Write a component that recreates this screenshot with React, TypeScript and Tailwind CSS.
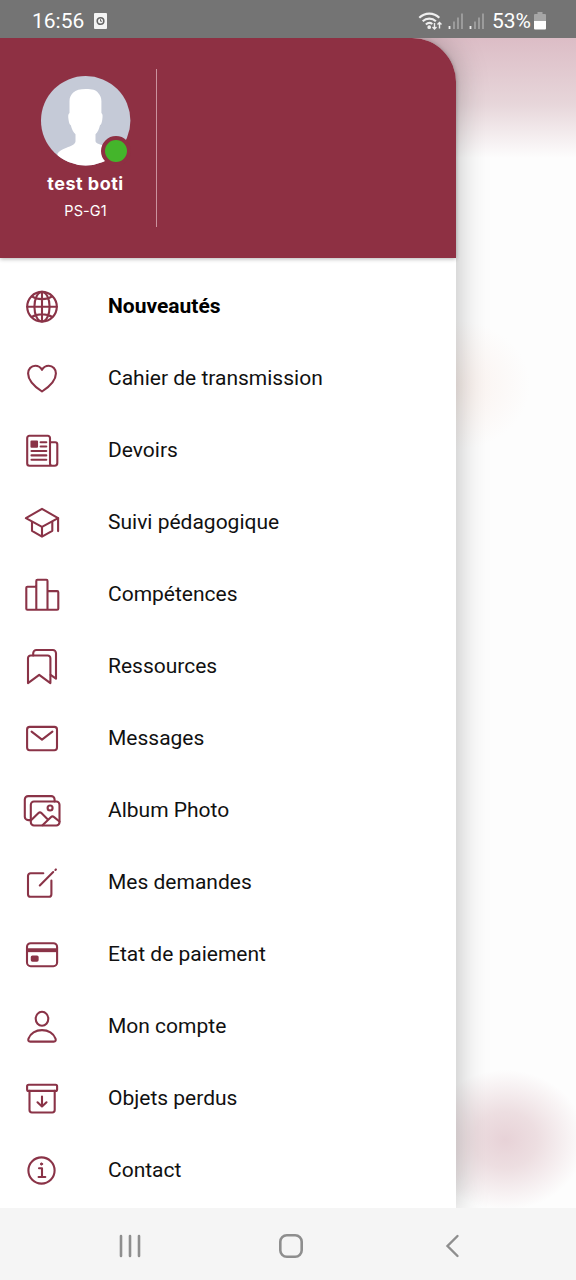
import type { ReactNode } from 'react';

const MENU_ITEMS: { label: string; active?: boolean; icon: ReactNode }[] = [
  {
    label: 'Nouveautés',
    active: true,
    icon: (
      <>
        <circle cx="24" cy="24.7" r="14.8" />
        <ellipse cx="24" cy="24.7" rx="7.6" ry="14.8" />
        <path d="M24 10v29.5M9.2 24.7h29.6M13.8 14.4c5.5 3.6 14.9 3.6 20.4 0M13.8 35c5.5-3.6 14.9-3.6 20.4 0" />
      </>
    ),
  },
  {
    label: 'Cahier de transmission',
    icon: (
      <path d="M24 15.8c-1.5-2.6-4-4-6.7-4-4.2 0-7.2 3.4-7.2 7.6 0 7 5.5 12.5 13.9 18.1 8.4-5.6 13.9-11.1 13.9-18.1 0-4.2-3-7.6-7.2-7.6-2.7 0-5.2 1.4-6.7 4z" />
    ),
  },
  {
    label: 'Devoirs',
    icon: (
      <>
        <path d="M32 16.2V12a2.2 2.2 0 0 0-2.2-2.2H11.4A2.2 2.2 0 0 0 9.2 12v25.6a2.2 2.2 0 0 0 2.2 2.2H36.6a2.7 2.7 0 0 0 2.7-2.7V18.4a2.2 2.2 0 0 0-2.2-2.2H32v21.2a2.4 2.4 0 0 0 2.4 2.4" />
        <rect x="13.5" y="15.5" width="5.5" height="5.2" fill="currentColor" />
        <path d="M22.6 16.2h5.7M22.6 20.5h5.7M13.5 25h14.8M13.5 29.4h14.8M13.5 33.7h14.8" />
      </>
    ),
  },
  {
    label: 'Suivi pédagogique',
    icon: (
      <>
        <path d="M7.9 20.2 24 10.9l16.1 9.3L24 28.9z" />
        <path d="M14 24v8.8l10 5.8 10.3-5.8V24M24 29v9.5M40.1 20.2v12.9" />
      </>
    ),
  },
  {
    label: 'Compétences',
    icon: (
      <path d="M18.3 39.8V17.8a1.1 1.1 0 0 0-1.1-1.1H9.4a1.1 1.1 0 0 0-1.1 1.1v20.9a1.1 1.1 0 0 0 1.1 1.1h29.8a1.1 1.1 0 0 0 1.1-1.1V22.2a1.1 1.1 0 0 0-1.1-1.1h-9.7M18.3 17.5v-6.6a1.1 1.1 0 0 1 1.1-1.1h9a1.1 1.1 0 0 1 1.1 1.1v28.9" />
    ),
  },
  {
    label: 'Ressources',
    icon: (
      <>
        <path d="M10 41.1V16.2a2.7 2.7 0 0 1 2.7-2.7h17a2.7 2.7 0 0 1 2.7 2.7v24.9l-11.2-8.3z" />
        <path d="M15.2 13.5v-2.3A3.2 3.2 0 0 1 18.4 8h16.4A3.2 3.2 0 0 1 38 11.2v25.5l-5.4-3.9" />
      </>
    ),
  },
  {
    label: 'Messages',
    icon: (
      <>
        <rect x="9.1" y="12.9" width="29.9" height="23.3" rx="2.6" />
        <path d="m13.6 17.6 10.4 8 10.4-8" />
      </>
    ),
  },
  {
    label: 'Album Photo',
    icon: (
      <>
        <path d="M12.8 34.1h-2.6a3.4 3.4 0 0 1-3.4-3.4V13.5a3.4 3.4 0 0 1 3.4-3.4h23a3.4 3.4 0 0 1 3.4 3.4v2" />
        <rect x="12.8" y="15.5" width="28.7" height="24" rx="3.2" />
        <circle cx="32.1" cy="22" r="2.5" />
        <path d="m12.8 34.6 7.7-7.5a2.1 2.1 0 0 1 2.9 0l6.2 6.1M24.5 39.2l8.6-8.2a2 2 0 0 1 2.7-.1l5.7 4.6" />
      </>
    ),
  },
  {
    label: 'Mes demandes',
    icon: (
      <>
        <path d="M25.3 15.3H12.6A2.6 2.6 0 0 0 10 17.9v18.3a2.6 2.6 0 0 0 2.6 2.6h18.2a2.6 2.6 0 0 0 2.6-2.6V22.6" />
        <path d="m21.8 27.4 13.4-13.3M37.4 11.9l.5-.5" />
      </>
    ),
  },
  {
    label: 'Etat de paiement',
    icon: (
      <>
        <rect x="9" y="13.2" width="30.1" height="23" rx="3.7" />
        <path d="M9 20.2h30.1" strokeWidth="3.9" strokeLinecap="butt" />
        <rect x="13.8" y="26.5" width="5.8" height="4.1" rx=".6" fill="currentColor" />
      </>
    ),
  },
  {
    label: 'Mon compte',
    icon: (
      <>
        <ellipse cx="24" cy="16.8" rx="6.3" ry="7" />
        <path d="M12.3 39.6c-1.9 0-2.4-1.3-1.8-3 1.8-5.2 7.3-8.5 13.5-8.5s11.7 3.3 13.5 8.5c.6 1.7.1 3-1.8 3z" />
      </>
    ),
  },
  {
    label: 'Objets perdus',
    icon: (
      <>
        <rect x="9.1" y="10.7" width="30" height="6.2" rx="1.5" />
        <path d="M11.5 16.9v19.2a2.4 2.4 0 0 0 2.4 2.4h20.4a2.4 2.4 0 0 0 2.4-2.4V16.9M24 22.5v10M19.5 28.3l4.5 4.3 4.5-4.3" />
      </>
    ),
  },
  {
    label: 'Contact',
    icon: (
      <>
        <circle cx="23.5" cy="24.5" r="13.1" />
        <circle cx="23.5" cy="18" r="1.1" fill="currentColor" strokeWidth="1" />
        <path d="M21 22.3h3v8.6M20.6 31h6.7" />
      </>
    ),
  },
];

function StatusBar() {
  return (
    <div className="relative z-20 flex h-[38px] shrink-0 items-center justify-between bg-[#747474] pr-[30px] pl-8 text-white">
      <div className="flex items-center gap-[10px] pt-1">
        <span className="text-[21px] leading-none">16:56</span>
        <svg width="13" height="16" viewBox="0 0 13 16">
          <rect width="13" height="16" rx="1" fill="#f4f4f4" />
          <circle cx="6.5" cy="8" r="3.3" fill="none" stroke="#666" strokeWidth="1.6" />
          <path d="M6.5 6.2V8.2h1.6" fill="none" stroke="#666" />
        </svg>
      </div>
      <div className="flex items-center pt-1">
        <svg width="25" height="20" viewBox="0 0 25 20" fill="none" stroke="#eee" strokeWidth="2.1">
          <path d="M1.3 6.8a14 14 0 0 1 20 0M4.7 10.3a9.5 9.5 0 0 1 13.2 0M7.9 13.6a5 5 0 0 1 6.5-.6" />
          <circle cx="11.2" cy="16.2" r=".8" fill="#eee" />
          <path d="M16.5 12v6M14.5 16l2 2 2-2M21.5 17.5v-6M19.5 13.5l2-2 2 2" strokeWidth="1.4" />
        </svg>
        <Signal />
        <Signal />
        <span className="ml-[7px] text-[21px] leading-none">53%</span>
        <svg className="ml-[3px]" width="12" height="18" viewBox="0 0 12 18">
          <path d="M3.5 0h5v2H11a1 1 0 0 1 1 1v6H0V3a1 1 0 0 1 1-1h2.5z" fill="#a6a6a6" />
          <path d="M0 9h12v7.5a1 1 0 0 1-1 1H1a1 1 0 0 1-1-1z" fill="#fff" />
        </svg>
      </div>
    </div>
  );
}

function Signal() {
  return (
    <svg className="ml-[5px]" width="16" height="18" viewBox="0 0 16 18" fill="none" strokeWidth="1.8">
      <path d="M1.5 14v3" stroke="#eee" />
      <path d="M6 9.5v7.5M10 5.5v11.5M14 1.5v15.5" stroke="#a0a0a0" />
    </svg>
  );
}

function DrawerHeader() {
  return (
    <header className="relative h-[220px] shrink-0 rounded-tr-[44px] bg-[#8e3043] pt-[31px] text-white shadow-[0_1px_4px_rgba(0,0,0,0.3)]">
      <div className="flex h-[158px] w-[157px] flex-col items-center border-r border-[#cb929e] pt-[7px] pl-[15px]">
        <div className="relative h-[90px] w-[90px]">
          <svg width="90" height="90" viewBox="0 0 90 90">
            <defs>
              <clipPath id="avatar">
                <circle cx="44.7" cy="44.7" r="44.7" />
              </clipPath>
            </defs>
            <g clipPath="url(#avatar)">
              <rect width="90" height="90" fill="#c5cad7" />
              <path
                fill="#fff"
                d="M45 13c-6 0-10 1-13 3.800-2.500 2.500-3.500 5-3.500 8.500V37c-1.600 1-1.400 3.500-1 6.500.4 3 1 5 2.300 5.800 1 4.200 2.400 6.700 4.700 9v7c0 3-4.500 4.700-9 6.500-4.500 1.700-7 3-9 5.700V90h62V79c-2-3-4.500-5-9-7-5.500-2.400-15-3.700-15-6.700v-7c2.300-2.300 3.500-4.800 4.500-9 1.300-.8 1.900-2.800 2.300-5.800.4-3 .6-5.500-.9-6.500V25.300c0-3.500-1-6-3.400-8.500C55 14 51 13 45 13z"
              />
            </g>
          </svg>
          <span className="absolute right-0 bottom-0 h-[30px] w-[30px] rounded-full border-4 border-[#8e3043] bg-[#44b52b]" />
        </div>
        <p className="mt-[8px] font-['Inter',sans-serif] text-[18px] leading-5 font-bold tracking-[0.5px]">test boti</p>
        <p className="mt-[7px] font-['Inter',sans-serif] text-[14.5px] leading-5 tracking-[0.1px]">PS-G1</p>
      </div>
    </header>
  );
}

function NavigationBar() {
  return (
    <nav className="relative z-20 flex h-[72px] shrink-0 items-center bg-[#f5f5f5] pt-1 pl-[118px] text-[#8e8e8e]">
      <svg width="24" height="24" viewBox="0 0 24 24" stroke="currentColor" strokeWidth="2.6" strokeLinecap="round">
        <path d="M3 2v20M12 2v20M21 2v20" />
      </svg>
      <svg className="ml-[137px]" width="24" height="24" viewBox="0 0 24 24" fill="none" stroke="currentColor" strokeWidth="2.6">
        <rect x="1.3" y="1.3" width="21.4" height="21.4" rx="6.5" />
      </svg>
      <svg className="ml-[142px]" width="16" height="24" viewBox="0 0 16 24" fill="none" stroke="currentColor" strokeWidth="2.4" strokeLinecap="round">
        <path d="M12.5 2 2.500 12l10 10" />
      </svg>
    </nav>
  );
}

export default function App() {
  return (
    <div className="relative flex h-[1280px] w-[576px] flex-col overflow-hidden bg-[#fdfdfd] font-[Roboto,sans-serif]">
      <StatusBar />

      {/* Blurred page behind the drawer */}
      <div className="absolute inset-x-0 top-[38px] h-[120px] bg-linear-to-b from-[#dcbdc6] via-[#e7d6da] via-55% to-[#fdfdfd]" />
      <div className="absolute top-[320px] left-[380px] h-[130px] w-[150px] bg-[radial-gradient(closest-side,#faf1ed,transparent)]" />
      <div className="absolute top-[1070px] left-[425px] h-[140px] w-[160px] bg-[radial-gradient(closest-side,#e7d2d7,#eddee1_40%,transparent)]" />

      <main className="relative z-10 flex h-[1170px] w-[456px] shrink-0 flex-col rounded-tr-[44px] bg-white shadow-[0_0_32px_rgba(0,0,0,0.28)]">
        <DrawerHeader />
        <ul className="pt-3">
          {MENU_ITEMS.map(({ label, active, icon }) => (
            <li key={label} className="flex h-[72px] items-center gap-[42px] pl-[18px]">
              <svg
                className="h-12 w-12 shrink-0 text-[#8a3347]"
                viewBox="0 0 48 48"
                fill="none"
                stroke="currentColor"
                strokeWidth="2.1"
                strokeLinecap="round"
                strokeLinejoin="round"
              >
                {icon}
              </svg>
              <span className={active ? 'pt-0.5 text-[21px] font-bold text-black' : 'pt-0.5 text-[21px] text-[#111]'}>{label}</span>
            </li>
          ))}
        </ul>
      </main>

      <NavigationBar />
    </div>
  );
}
